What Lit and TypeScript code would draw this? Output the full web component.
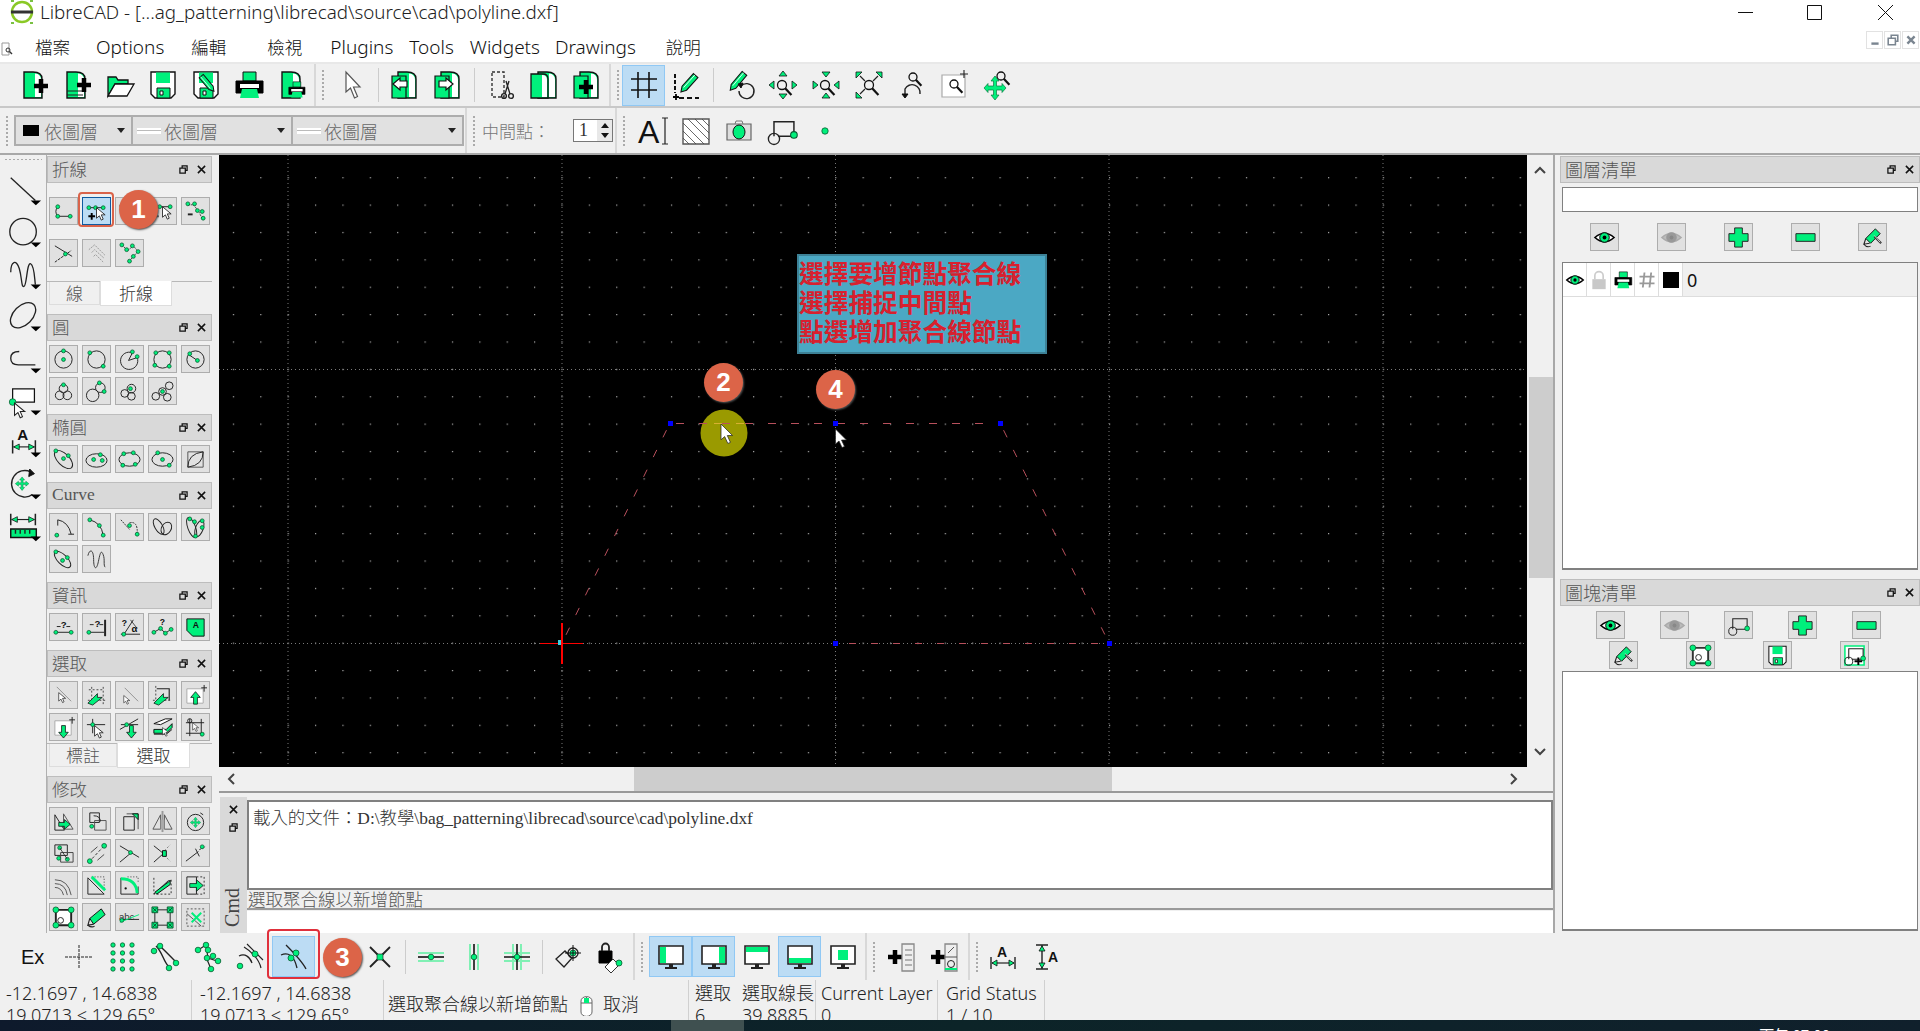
import { LitElement, css, html, svg } from "lit"
import { customElement } from "lit/decorators.js"

const G = "#00f07c"

// small drawing helpers, everything below is built from these
const L = (d: string, w = 1, c = "#222", dash = "") =>
  svg`<path d=${d} fill="none" stroke=${c} stroke-width=${w} stroke-dasharray=${dash} />`
const F = (d: string, f = G, c = "#111", w = 1) => svg`<path d=${d} fill=${f} stroke=${c} stroke-width=${w} />`
const N = (x: number, y: number, r = 2) =>
  svg`<circle cx=${x} cy=${y} r=${r} fill=${G} stroke="#0a5a30" stroke-width="0.8" />`
const C = (x: number, y: number, r: number, w = 1, c = "#222") =>
  svg`<circle cx=${x} cy=${y} r=${r} fill="none" stroke=${c} stroke-width=${w} />`
const E = (x: number, y: number, rx: number, ry: number, a = 0, w = 1) =>
  svg`<ellipse cx=${x} cy=${y} rx=${rx} ry=${ry} fill="none" stroke="#222" stroke-width=${w} transform="rotate(${a} ${x} ${y})" />`
const CUR = (x: number, y: number, s = 1) =>
  svg`<path transform="translate(${x} ${y}) scale(${s})" d="M0 0V11L3 8.5 5 13 7 12 5 7.5H9Z" fill="#fff" stroke="#222" stroke-width="0.9" />`
const PLUS = (x: number, y: number, a: number, t: number, c = "#000") =>
  svg`<path d="M${x - a} ${y}H${x + a}M${x} ${y - a}V${y + a}" stroke=${c} stroke-width=${t} fill="none" />`
const MAG = (x: number, y: number, r = 4.5) =>
  svg`<circle cx=${x} cy=${y} r=${r} fill="none" stroke="#111" stroke-width="1.3" /><path d="M${x + r * 0.7} ${y + r * 0.7}l${r * 1.4} ${r * 1.5}" stroke="#111" stroke-width="2.2" />`
const ARW = (d: string) => svg`<path d=${d} fill=${G} stroke="#111" stroke-width="0.8" />`
const TXT = (x: number, y: number, t: string, s: number, w = 700, f = "#111") =>
  svg`<text x=${x} y=${y} font-size=${s} font-weight=${w} fill=${f} font-family="Liberation Sans, sans-serif">${t}</text>`

const DOC = (x = 0) => svg`<g transform="translate(${x} 0)">
  ${F("M6 3H15Q24 3 24 10V29H6Z", G, "#111", 1.4)}${F("M17 4.5Q23 5 23 11V28H17Z", "#fff", "none")}</g>`
const FLOPPY = svg`${F("M4 3H28V25L24 29H8L4 25Z", "#fff", "#111", 1.4)}${F("M9 3.5H23V14H9Z", G, "none")}${F("M10 19H23V29H10Z", G, "#111")}${F("M13 22h3v4h-3z", "#fff")}`
const PRINTER = (s = 1, x = 0, y = 0) => svg`<g transform="translate(${x} ${y}) scale(${s})">
  ${F("M10 3H23V12H10Z", G, "#111")}${F("M3 12H30V24H3Z", "#000", "#000")}${F("M7 15H26V19H7Z", "#fff", "none")}${F("M9 20H24L26 29H7Z", G, "none")}</g>`
const PENCIL = (x: number, y: number, a = 45, s = 1) => svg`<g transform="translate(${x} ${y}) rotate(${a}) scale(${s})">
  ${F("M-3 -10H3V7L0 12L-3 7Z", G, "#111", 1.1)}${L("M-1 -10V7", 0.8, "#fff")}</g>`
const MONITOR = (k: string) => svg`
  ${F("M4 5H28V23H4Z", "#fff", "#222", 1.6)}
  ${k === "l" ? F("M5 6H11V22H5Z", G, "none") : ""}
  ${k === "r" ? F("M21 6H27V22H21Z", G, "none") : ""}
  ${k === "t" ? F("M5 6H27V11H5Z", G, "none") : ""}
  ${k === "b" ? F("M5 17H27V22H5Z", G, "none") : ""}
  ${k === "c" ? F("M11 9H21V19H11Z", G, "none") : ""}
  ${F("M14 23H18V26H14Z", "#222", "none")}${F("M10 26H22V28H10Z", "#222", "none")}`
const EYE = (gray = false) => svg`
  <path d="M2 12Q12 3 22 12Q12 21 2 12Z" fill=${gray ? "#bbb" : "#fff"} stroke=${gray ? "#aaa" : "#000"} stroke-width="1.6" />
  <circle cx="12" cy="12" r="5" fill=${gray ? "#999" : G} stroke=${gray ? "#999" : "#000"} />
  <circle cx="12" cy="12" r="2" fill=${gray ? "#888" : "#000"} />`
const BLOCK = svg`${L("M6 16V5H21V16H9", 1.1)}${C(6, 18, 4.2)}${N(21, 15, 2.5)}`
const MOVE = "M16 5l4 5h-2.500v4.500H22V12l5 4-5 4v-2.500h-4.500V22H20l-4 5-4-5h2.500v-4.500H10V20l-5-4 5-4v2.500h4.500V10H12z"

const topIcons: Record<string, any> = {
  new: svg`${DOC()}${PLUS(23, 17, 7, 4.5)}`,
  tpl: svg`${DOC()}${L("M6 22H22M6 26H22", 1)}${PLUS(23, 16, 7, 4.5)}`,
  open: svg`${F("M4 27V8H12L14 11H24V15H11L4 27Z", G, "#111", 1.3)}${F("M11 15H30L23 27H4Z", "#fff", "#111", 1.3)}`,
  save: FLOPPY,
  saveas: svg`${FLOPPY}${PENCIL(17, 14, -40, 0.9)}`,
  print: PRINTER(),
  preview: svg`${DOC()}${PRINTER(0.6, 11, 11)}`,
  arrow: F("M10 3V23L14.5 19 18.5 29 21.5 27.5 17.5 18H24Z", "#fff", "#555", 1.2),
  prev: svg`${DOC(3)}${F("M3 7H17V29H3Z", G, "#111", 1.2)}${F("M4 15L11 9V12H18V18H11V21Z", "#fff", "#111", 1.2)}`,
  next: svg`${DOC(3)}${F("M3 7H17V29H3Z", G, "#111", 1.2)}${F("M21 15L14 9V12H7V18H14V21Z", "#fff", "#111", 1.2)}`,
  cut: svg`${L("M7 3H19V28H7Z", 1.4, "#333", "3 2")}${C(19, 27, 2.4, 1.4)}${C(26, 27, 2.4, 1.4)}${L("M20 25L24 12M25 25L21 12", 1.3)}`,
  copy: svg`${DOC(4)}${F("M3 5H15Q20 5 20 10V29H3Z", G, "#111", 1.3)}${F("M14 6Q19 6 19 11V28H14Z", "#fff", "none")}`,
  paste: svg`${DOC(3)}${F("M3 7H17V29H3Z", G, "#111", 1.2)}${PLUS(15, 18, 7, 4.5)}`,
  grid: L("M10 3V29M21 3V29M3 10H29M3 21H29", 1.6, "#111"),
  draft: svg`${L("M4 5V24", 2, "#111", "4 2")}${L("M8 29H28", 2, "#111", "5 3")}${PLUS(5, 28, 3, 1.8)}${PENCIL(18, 14, 42, 1)}`,
  redraw: svg`${PENCIL(14, 12, 40, 1)}${L("M17 17A7.500 7.500 0 1 1 15 22", 1.4)}${F("M14 15L19 14L17 19Z", "#111")}`,
  zoomin: svg`${MAG(15, 16)}${ARW("M16 2l4 5h-8z")}${ARW("M16 30l4-5h-8z")}${ARW("M2 16l5 4v-8z")}${ARW("M30 16l-5 4v-8z")}`,
  zoomout: svg`${MAG(15, 16)}${ARW("M16 8l4-5h-8z")}${ARW("M16 24l4 5h-8z")}${ARW("M8 16l-5 4v-8z")}${ARW("M24 16l5 4v-8z")}`,
  zoomauto: svg`${MAG(16, 16)}${L("M7 7L12 12M25 7L20 12M7 25L12 20", 1.2)}${ARW("M3 3H9L3 9Z")}${ARW("M29 3H23L29 9Z")}${ARW("M3 29H9L3 23Z")}`,
  zoomprev: svg`${MAG(17, 8, 4)}${L("M24 25A8 8 0 0 0 9 20V27", 1.4)}${F("M6 25h6l-3 4z", "#111")}`,
  zoomwin: svg`${F("M3 6H26V28H3Z", "#fff", "#aaa", 1.2)}${MAG(15, 15, 4)}${L("M25 1V9M21 5H29", 1.1)}`,
  zoompan: svg`${F("M13 7l4 5h-2.5v5H20v-2.5l4 4.5-4 4.5V21h-5.5v5H17l-4 5-4-5h2.5v-5H6v2.5L2 19l4-4.5V17h5.5v-5H9z", G, "#0a7a40", 0.7)}${MAG(19, 7, 4)}`,
  atext: svg`${TXT(1, 28, "A", 32, 400)}${L("M25 3H31M28 3V29M25 29H31", 1.2)}`,
  hatch: svg`${F("M3 4H29V29H3Z", "#fff", "#555", 1.4)}${L("M3 8L24 29M3 16L16 29M8 4L29 25M15 4L29 18M22 4L29 11M3 23L9 29", 0.8, "#444")}`,
  camera: svg`${F("M4 9H28V25H4Z", "#ddd", "#666", 1.2)}${L("M12 9L13 6H19L20 9", 1, "#777")}<ellipse cx="16" cy="17" rx="6" ry="7" fill=${G} stroke="#111" />`,
  block: svg`<g transform="scale(1.33)">${BLOCK}</g>`,
  point: N(16, 16, 3.2),
  ex: TXT(1, 23, "Ex", 20, 400),
  cross: L("M2 16H30M16 4V28", 1, "#222", "3 1"),
  sgrid: svg`${[7, 16.5, 26].map(x => [4, 12, 20, 28].map(y => N(x, y, 2.2)))}`,
  send: svg`${L("M7 5C14 12 14 20 20 26", 1.4)}${L("M10 4C18 12 20 14 26 20", 1.4)}${N(11, 5, 2.8)}${N(27, 22, 2.8)}${N(20, 27, 2.8)}${N(5, 10, 2.8)}`,
  sonent: svg`${L("M6 9L14 4L16 17L25 20M14 16L19 28", 1.2)}${N(6, 9, 2.8)}${N(14, 4, 2.8)}${N(16, 9, 2.8)}${N(15, 17, 2.8)}${N(21, 15, 2.8)}${N(26, 20, 2.8)}${N(19, 28, 2.8)}`,
  scenter: svg`${L("M9 6C16 10 24 18 26 27M12 3L28 19", 1.2)}${N(20, 13, 3)}${N(5, 25, 2.8)}${L("M4 15C10 12 15 16 17 22", 1.2)}`,
  smiddle: svg`${L("M8 4C14 10 24 20 28 28", 1.3)}${L("M3 14C10 11 16 14 19 27", 1.3)}${N(18, 12, 3)}${N(13, 17, 3)}`,
  sdist: svg`${L("M6 16H26M16 4V28", 1.4)}${N(24, 16, 2.5)}`,
  sinter: svg`${L("M6 6L26 26M26 6L6 26", 1.8)}${F("M13 13H19V19H13Z", G, "#111", 0.6)}`,
  horiz: svg`${L("M3 12H29M3 20H29", 2, "#80f0b4")}${L("M3 16H29", 1.6, "#111")}${N(16, 16, 2.8)}`,
  vert: svg`${L("M12 3V29M20 3V29", 2, "#80f0b4")}${L("M16 3V29", 1.6, "#111")}${N(16, 16, 2.8)}`,
  ortho: svg`${L("M3 12H29M3 20H29M12 3V29M20 3V29", 2, "#80f0b4")}${L("M3 16H29M16 3V29", 1.6, "#111")}${N(16, 16, 2.8)}`,
  rel: svg`${L("M4 18L13 10 20 17 12 26Z", 1.3)}${C(21, 12, 5, 1.3)}${N(21, 12, 3)}${PLUS(21, 12, 8, 1, "#111")}`,
  lock: svg`${F("M4 10H17V22H4Z", "#000", "#000")}${L("M7 10V6A3.5 3.5 0 0 1 14 6V10", 1.8)}${F("M10 26L18 18 24 24 16 32Z", "#fff", "#333")}${N(24, 22, 3)}`,
  mon_l: MONITOR("l"),
  mon_r: MONITOR("r"),
  mon_t: MONITOR("t"),
  mon_b: MONITOR("b"),
  mon_c: MONITOR("c"),
  addlist: svg`${PLUS(8, 16, 7, 4.5)}${F("M15 3H27V30H15Z", "#eee", "#888", 1.3)}${L("M18 9H25M18 14H25M18 19H25M18 24H25", 1, "#777")}`,
  addblock: svg`${PLUS(8, 16, 7, 4.5)}${F("M15 3H27V30H15Z", "#eee", "#888", 1.3)}${L("M15 16H27M18 12L24 6", 1, "#555")}${C(21, 23, 3.5)}${L("M15 28H27", 2, G)}`,
  dimh: svg`${L("M4 16V28M28 16V28", 1.4)}${L("M5 22H27", 1.2)}${ARW("M5 22l5-3v6z")}${ARW("M27 22l-5-3v6z")}${TXT(10, 16, "A", 14)}`,
  dimv: svg`${L("M6 4H18M6 28H18M12 4V28", 1.4)}${ARW("M12 5l-3 5h6z")}${ARW("M12 27l-3-5h6z")}${TXT(18, 21, "A", 14)}`,
}

const dockIcons: Record<string, any> = {
  p1: svg`${L("M6 7Q2 12 6 17H19")}${N(6, 7)}${N(6, 17)}${N(19, 17)}`,
  p2: svg`${L("M4 8H20")}${N(4, 8)}${N(11, 8)}${N(19, 8)}${PLUS(7, 17, 3.5, 2)}${CUR(12, 8)}`,
  p3: svg`${L("M4 6H20")}${N(4, 6)}${N(19, 6)}${CUR(10, 8)}`,
  p4: svg`${L("M4 7H21")}${N(9, 7)}${N(20, 7)}${L("M3 17H8", 2)}${CUR(12, 7)}`,
  p5: svg`${L("M4 5L10 5 16 13 19 20", 1, "#444", "2 1")}${N(4, 4)}${N(11, 4)}${N(14, 11)}${N(19, 12)}${N(20, 19)}${L("M4 15H9", 2)}`,
  p6: svg`${L("M3 4L21 15")}${L("M3 21L20 9", 1, "#222", "3 1")}${N(14, 12.5)}`,
  p7: L("M4 8L10 3L21 14M7 11L10 8L20 17M9 15L11 13L19 21", 1, "#999", "2 1"),
  p8: svg`${L("M4 3L10 9L16 4L21 10L16 15L11 21", 1, "#444", "2 1")}${N(4, 3)}${N(9, 8)}${N(15, 4)}${N(21, 10)}${N(16, 15)}${N(12, 20)}`,
  c1: svg`${C(12, 12, 9)}${N(12, 3)}${N(12, 12)}`,
  c2: svg`${C(12, 12, 9)}${N(5, 5)}${N(19, 19)}`,
  c3: svg`${L("M15 5A9 9 0 1 0 20 10L11 13L15 5")}${N(15, 4)}${N(20, 9)}`,
  c4: svg`${C(12, 12, 9)}${N(5, 5)}${N(19, 5)}${N(4, 18)}${N(19, 19)}`,
  c5: svg`${C(12, 12, 9)}${L("M5 7L14 13")}${N(6, 6)}${N(14, 13)}`,
  c6: svg`${C(8, 16, 4.5)}${C(16, 16, 4.5)}${C(12, 9, 4.5)}${N(12, 5)}`,
  c7: svg`${C(8, 16, 6.5)}${C(16, 8, 5)}${N(15, 3)}${N(20, 12)}`,
  c8: svg`${C(7, 14, 4)}${C(14, 9, 4.5)}${C(14, 17, 4)}${N(13, 9)}`,
  c9: svg`${C(5, 17, 4)}${C(19, 6, 4)}${C(17, 18, 4)}${C(12, 12, 4)}${N(12, 12)}`,
  e1: svg`${E(12, 12, 12, 6, 45)}${N(4, 3)}${N(12, 11)}${N(17, 8)}`,
  e2: svg`${E(12, 13, 11, 7)}${N(9, 12)}${N(16, 7)}${N(18, 13)}`,
  e3: svg`${E(12, 12, 11, 7)}${N(6, 6)}${N(16, 5)}${N(5, 18)}${N(18, 17)}`,
  e4: svg`${E(12, 12, 11, 7)}${N(7, 5)}${N(12, 12)}${N(19, 18)}`,
  e5: svg`${L("M4 4H20V20H4Z", 1, "#555")}${L("M4 20Q4 6 20 4Q20 18 4 20Z")}`,
  u1: svg`${L("M6 4Q17 6 20 19M17 19H23M6 4V10")}${N(5, 20)}`,
  u2: svg`${L("M5 4Q17 7 19 20")}${N(5, 4)}${N(15, 10)}${N(19, 20)}`,
  u3: svg`${L("M3 4L12 14M12 7Q21 5 20 19", 1, "#333", "2 1")}${N(12, 10)}${N(20, 19)}`,
  u4: svg`${E(8, 11, 9, 4, 60)}${E(16, 13, 7, 5, 120)}`,
  u5: svg`${E(8, 12, 11, 4, 70)}${E(16, 13, 9, 4, 110)}${N(6, 3)}${N(11, 6)}${N(19, 5)}${N(12, 21)}${N(19, 12)}`,
  u6: svg`${E(11, 12, 11, 5, 45)}${N(4, 4)}${N(11, 13)}${N(16, 10)}`,
  u7: L("M3 8C5 0 9 2 9 12S12 24 14 14 17 2 19 7 19 18 21 20", 1, "#333"),
  i1: svg`${L("M4 17H20")}${N(4, 17)}${N(20, 17)}${L("M5 11H9M15 11H19", 1)}${TXT(9, 13, "?", 10)}`,
  i2: svg`${L("M4 17H20M21 4V21", 1)}${L("M21 4V21", 2)}${N(4, 17)}${TXT(10, 11, "?", 10)}${L("M5 9H9M15 9H19")}`,
  i3: svg`${L("M3 19H23M5 21L16 4")}${N(6, 19)}${TXT(4, 10, "?", 9)}${TXT(14, 17, "α", 10)}${L("M13 4L20 13", 0.8)}`,
  i4: svg`${L("M3 17L10 13L15 18L22 13")}${N(3, 17)}${N(10, 13)}${N(15, 18)}${N(21, 14)}${TXT(9, 9, "?", 9)}`,
  i5: svg`${F("M3 3H21V21H9L3 15Z", G, "#111", 1)}${TXT(9, 12, "A", 9, 700)}`,
  s1: svg`${L("M5 3L20 18", 0.9, "#888")}${CUR(7, 9, 0.8)}`,
  s2: svg`${L("M7 3V17M3 17H21M4 6H20M19 3V21", 0.9, "#333", "2 2")}${ARW("M3 20L13 10V14H18L8 22Z")}`,
  s3: svg`${L("M7 4L21 18", 0.9, "#888")}${CUR(6, 12, 0.7)}`,
  s4: svg`${L("M6 5H19V17", 1.2)}${L("M5 2V21M2 17H21", 0.9, "#333", "2 2")}${ARW("M3 20L13 10V14H18L8 22Z")}`,
  s5: svg`${F("M3 5H20V20H3Z", "#fff", "#aaa")}${L("M21 1V8M18 4H24")}${ARW("M12 8l5 6h-3v7h-4v-7H7z")}`,
  s6: svg`${F("M3 5H20V20H3Z", "#fff", "#aaa")}${L("M21 1V8M18 4H24")}${ARW("M12 23l5-6h-3v-7h-4v7H7z")}`,
  s7: svg`${L("M2 9H21M8 3V18")}${N(8, 9)}${CUR(10, 10)}`,
  s8: svg`${L("M2 14L21 3M3 9H21")}${N(9, 9)}${ARW("M14 23l5-6h-3v-7h-4v7H9z")}`,
  s9: svg`${F("M3 8L15 3H22L10 9Z", "#fff")}${F("M3 14H16L22 8V12L16 18H3Z", G)}${L("M3 19H16L22 14")}${CUR(12, 12, 0.7)}`,
  s10: svg`${L("M2 7H21M6 3V21M2 18H21M18 3V21", 1)}${C(6, 5, 2.2)}${CUR(9, 7, 0.7)}${N(19, 19)}`,
  m1: svg`${L("M3 5V21H13Z")}${L("M12 4L22 20H12Z", 1, "#555")}${ARW("M7 13h6v-3l6 5-6 5v-3H7z")}`,
  m2: svg`${L("M5 3H15V13H5Z")}${L("M10 11H22V21H10Z", 1, "#555")}${L("M9 6Q16 6 16 12")}${N(7, 17)}`,
  m3: svg`${L("M6 7H17V21H6Z")}${L("M9 4H21V20", 1, "#555")}${F("M15 4H21V10Z")}`,
  m4: svg`${L("M2 20L10 5V20ZM22 20L14 5V20Z", 1, "#555")}${L("M12 1V23", 2, "#999")}${F("M10 10H14V20H10Z", "#aaa", "none")}`,
  m5: svg`${C(12, 13, 8.5)}${L("M17 3L20 5")}<g transform="translate(12 13) scale(0.5) translate(-16 -16)">${F(MOVE, G, "#0a7a40", 0.8)}</g>`,
  m6: svg`${L("M3 3H16V14H3Z")}${L("M9 11H22V21H9Z", 1, "#444")}${N(8, 6)}${N(7, 17)}${N(16, 18)}${L("M8 6L16 18", 0.8)}`,
  m7: svg`${L("M4 21L20 4", 1, "#333", "3 2")}${N(5, 20, 2.5)}${N(20, 4, 2.5)}${L("M6 11L13 5M13 19L20 13", 0.8)}`,
  m8: svg`${L("M2 4L22 16M2 21L14 11", 1)}${N(13, 11)}`,
  m9: svg`${L("M3 4L13 12L3 21", 1)}${L("M14 9L20 3M14 14L20 20", 1, "#777", "2 2")}${F("M12 9H16V15H12Z", G)}`,
  m10: svg`${L("M2 20L15 10M12 7L16 15", 1)}${L("M16 8L22 5", 1, "#333", "2 1")}${N(19, 5)}`,
  m11: svg`${L("M3 6Q17 6 20 22M3 10Q14 10 16 22M3 14Q10 14 12 22", 1, "#555")}`,
  m12: svg`${L("M3 4V21H20L3 4")}${L("M7 3H20V17", 1, "#333", "1 2")}${L("M7 3L21 17", 3, G)}`,
  m13: svg`${L("M3 4V21H21V13")}${L("M10 3H21V10", 1, "#333", "1 2")}${L("M3 5Q19 5 20 20", 3, G)}<circle cx="8" cy="15" r="1.200" fill="#111" />`,
  m14: svg`${L("M3 4V21H21V6", 1, "#333", "2 2")}${L("M3 21L18 7H21")}${F("M4 19L20 7L20 11L6 21Z")}`,
  m15: svg`${L("M3 3H13V21H3Z")}${L("M13 3H21V21H13", 1, "#333", "2 2")}${ARW("M6 10h7V6l7 6-7 6v-4H6z")}`,
  m16: svg`${F("M4 4H20V20H4Z", "#fff", "#222", 2)}${C(9, 15, 3)}${N(4, 4, 3)}${N(20, 4, 3)}${N(4, 20, 3)}${N(20, 20, 3)}`,
  m17: svg`${F("M5 13L17 3L21 9L9 19Z")}${L("M5 13L3 20L9 19 M3 20Q7 23 10 21", 1.2)}`,
  m18: svg`${TXT(1, 15, "abc", 10, 400, "#333")}${L("M2 14L22 14", 1)}${L("M2 17L22 9", 1, G)}${N(4, 15)}`,
  m19: svg`${L("M4 4H20V20H4Z", 1)}${[[4, 4], [20, 4], [4, 20], [20, 20]].map(([x, y]) => svg`<path d="M${x - 3} ${y - 3}h6v6h-6z" fill=${G} stroke="#0a5a30" /><path d="M${x - 2} ${y - 2}l4 4m0-4l-4 4" stroke="#111" stroke-width="0.7" />`)}`,
  m20: svg`${L("M3 3H21V21H3Z", 1, "#555", "2 2")}${L("M3 8L18 21", 1, "#555")}${L("M8 7L18 17M18 7L8 17", 2, G)}`,
  eye: EYE(),
  eyeoff: EYE(true),
  add: F("M8 2H16V8H22V16H16V22H8V16H2V8H8Z", G, "#222", 1),
  del: F("M2 8H22V16H2Z", G, "#222", 1),
  edit: svg`${F("M5 13L15 3L20 8L10 18Z")}${L("M5 13L3 19L9 18M3 19Q6 23 10 21", 1.1)}${L("M14 11L21 18", 2.2, "#333")}${L("M14 10L20 17", 0.8, "#fff")}`,
  blockv: BLOCK,
  resize: svg`${F("M4 4H20V20H4Z", "#fff", "#333", 2)}${C(10, 14, 3)}${N(4, 4, 3)}${N(20, 4, 3)}${N(4, 20, 3)}${N(20, 20, 3)}`,
  saveb: svg`<g transform="scale(0.75)">${FLOPPY}</g>`,
  addb: svg`${F("M2 2H22V22H2Z", "#fff", G, 1.6)}${BLOCK}${PLUS(16, 18, 4, 2)}`,
}

// triangle marks the flyout on the vertical tool strip
const TRI = svg`<path d="M26 27H37L31.500 32Z" fill="#000" />`
const sideIcons = [
  svg`${L("M5 3L31 27", 1.4)}${TRI}`,
  svg`${C(18, 15.5, 14, 1.4)}${TRI}`,
  svg`${L("M5 14C5 2 11 0 14 10S16 30 19 29 22 3 26 5 30 20 31 27", 1.4)}${TRI}`,
  svg`${E(18, 15, 16, 10, -45, 1.4)}${TRI}`,
  svg`${L("M14 9Q5 9 5 16Q5 23 13 23H31", 1.4)}${TRI}`,
  svg`${F("M7 4H30V18H7Z", "#fff", "#111", 1.3)}${N(7, 18, 3.5)}${CUR(9, 19, 1.2)}${TRI}`,
  svg`${TXT(12, 14, "A", 16)}${L("M7 14V28M31 14V28", 1.6)}${L("M8 21H30", 1.2)}${ARW("M8 21l6-3v6z")}${ARW("M30 21l-6-3v6z")}${TRI}`,
  svg`${L("M26 3A14 14 0 1 0 28 27", 1.4)}${F("M25 0L30 5 24 8Z", "#111")}<g transform="translate(17 15.500) scale(0.65) translate(-16 -16)">${F(MOVE, G, "#0a7a40", 0.8)}</g>${TRI}`,
  svg`${L("M5 3V15M31 3V15", 1.6)}${L("M6 9H30", 1.2)}${ARW("M6 9l6-3v6z")}${ARW("M30 9l-6-3v6z")}${F("M5 19H32V28H5Z", G, "#111", 1.5)}${L("M10 20V24M15 20V24M20 20V24M25 20V24", 1.5)}${TRI}`,
]

const topRow = (names: string[]) => names.map(n => html`<div class="tool"><svg viewBox="0 0 32 32">${topIcons[n]}</svg></div>`)

interface Dock {
  title: string
  latin?: boolean
  cls: string
  rows: string[][]
  tabs?: [string, string, string]
}

const docks: Dock[] = [
  { title: "折線", cls: "poly tabbed", rows: [["p1", "p2", "p3", "p4", "p5"], ["p6", "p7", "p8"]], tabs: ["線", "折線", "wide1"] },
  { title: "圓", cls: "", rows: [["c1", "c2", "c3", "c4", "c5"], ["c6", "c7", "c8", "c9"]] },
  { title: "橢圓", cls: "", rows: [["e1", "e2", "e3", "e4", "e5"]] },
  { title: "Curve", latin: true, cls: "", rows: [["u1", "u2", "u3", "u4", "u5"], ["u6", "u7"]] },
  { title: "資訊", cls: "", rows: [["i1", "i2", "i3", "i4", "i5"]] },
  { title: "選取", cls: "tabbed", rows: [["s1", "s2", "s3", "s4", "s5"], ["s6", "s7", "s8", "s9", "s10"]], tabs: ["標註", "選取", "wide2"] },
  { title: "修改", cls: "", rows: [["m1", "m2", "m3", "m4", "m5"], ["m6", "m7", "m8", "m9", "m10"], ["m11", "m12", "m13", "m14", "m15"], ["m16", "m17", "m18", "m19", "m20"]] },
]

const menus = [
  { t: "檔案", gap: 0 },
  { t: "Options", gap: 26, en: true },
  { t: "編輯", gap: 27 },
  { t: "檢視", gap: 41 },
  { t: "Plugins", gap: 28, en: true },
  { t: "Tools", gap: 16, en: true },
  { t: "Widgets", gap: 16, en: true },
  { t: "Drawings", gap: 15, en: true },
  { t: "說明", gap: 30 },
]

const floatIcon = html`<svg class="ctl" viewBox="0 0 10 10"><path d="M3.500 3V1H9V6H7M1 3.500H7V9H1Z" fill="none" stroke="#111" stroke-width="1.400" /></svg>`
const closeIcon = html`<svg class="ctl" viewBox="0 0 10 10"><path d="M1 1L9 9M9 1L1 9" stroke="#111" stroke-width="1.700" /></svg>`

const dot = (i: string, active = false) =>
  html`<div class="btn ${active ? "active" : ""}"><svg viewBox="0 0 24 24">${dockIcons[i]}</svg></div>`

@customElement("app-root")
export class AppRoot extends LitElement {
  renderDock(d: Dock) {
    return html`
      <section class="dock ${d.cls}">
        <div class="dock-title">
          <span class=${d.latin ? "serif" : ""}>${d.title}</span>
          <i></i>${floatIcon}${closeIcon}
        </div>
        <div class="rows">
          ${d.rows.map(r => html`<div class="row">${r.map(i => dot(i, i === "p2"))}</div>`)}
        </div>
        ${d.tabs
          ? html`<div class="tabs ${d.tabs[2]}">
              <span class="tab">${d.tabs[0]}</span><span class="tab cur">${d.tabs[1]}</span>
            </div>`
          : ""}
      </section>
    `
  }

  renderCanvas() {
    const vs = [288, 562, 835.5, 1109, 1383]
    const hs = [369.5, 643.5]
    return svg`
      <svg class="cad" viewBox="219 155 1308 612">
        <defs>
          <pattern id="dots" patternUnits="userSpaceOnUse" x="835.2" y="368.8" width="27.38" height="27.38">
            <rect width="1.200" height="1.200" fill="#b0b0b0" />
          </pattern>
        </defs>
        <rect x="219" y="155" width="1308" height="612" fill="#000" />
        <rect x="219" y="155" width="1308" height="612" fill="url(#dots)" />
        ${vs.map(x => svg`<path d="M${x} 155V767" stroke="#7a7a7a" stroke-dasharray="1 3" />`)}
        ${hs.map(y => svg`<path d="M219 ${y}H1527" stroke="#7a7a7a" stroke-dasharray="1 3" />`)}
        <circle cx="724" cy="433" r="23.500" fill="#9a9a00" />
        <path d="M670 423.500H1000" stroke="#b8505c" stroke-dasharray="8 15" stroke-dashoffset="-6" />
        <path d="M714 423.500H722M736 423.500H744" stroke="#d8b030" />
        <path d="M670 423L562 643" stroke="#b8505c" stroke-dasharray="8 14" stroke-dashoffset="-8" />
        <path d="M1000 423L1109 643" stroke="#b8505c" stroke-dasharray="8 14" stroke-dashoffset="-8" />
        <path d="M841 643.500H1105" stroke="#b8505c" stroke-dasharray="7 15" stroke-dashoffset="-8" />
        <path d="M540 643.500H583" stroke="#f00" />
        <path d="M562 623V664" stroke="#f00" stroke-width="2" />
        <rect x="558" y="640" width="3" height="5" fill="#3fd0e0" />
        ${[[670, 423], [835, 423], [1000, 423], [835, 643], [1109, 643]].map(
          ([x, y]) => svg`<rect x=${x - 2} y=${y - 2} width="5" height="5" fill="#0000ff" />`,
        )}
        <path transform="translate(721 424) scale(1.050)" d="M0 0V15L3.500 12 6.500 18.500 9 17.500 6 11H11Z" fill="#fff" stroke="#222" stroke-width="0.700" />
        <path transform="translate(835.500 429) scale(1)" d="M0 0V15L3.500 12 6.500 18.500 9 17.500 6 11H11Z" fill="#fff" stroke="#222" stroke-width="0.700" />
      </svg>
    `
  }

  render() {
    return html`
      <div class="app">
        <header class="title">
          <svg class="logo" viewBox="0 0 24 24">
            <path d="M1 1h3M20 1h3M1 23h3M20 23h3" stroke="#7ac143" stroke-width="2" />
            <circle cx="12" cy="12" r="10" fill="none" stroke="#8ac926" stroke-width="2.500" />
            <path d="M1 12H23" stroke="#333" stroke-width="3" />
          </svg>
          <span>LibreCAD - [...ag_patterning\\librecad\\source\\cad\\polyline.dxf]</span>
          <i></i>
          <svg class="win mid" viewBox="0 0 15 15"><path d="M0 7.500H15" stroke="#111" /></svg>
          <svg class="win mid2" viewBox="0 0 15 15"><path d="M0.500 0.500H14.500V14.500H0.500Z" fill="none" stroke="#111" /></svg>
          <svg class="win last" viewBox="0 0 15 15"><path d="M0 0L15 15M15 0L0 15" stroke="#111" /></svg>
        </header>

        <nav class="menu">
          <svg class="mdi-ic" viewBox="0 0 12 14">
            <path d="M1 1H8V13H1Z" fill="#fff" stroke="#999" />
            <circle cx="7" cy="8" r="2" fill="none" stroke="#333" />
            <path d="M8.500 9.500L11 12" stroke="#333" stroke-width="1.400" />
          </svg>
          ${menus.map(m => html`<span class=${m.en ? "en" : "zh"} style="margin-left:${m.gap}px">${m.t}</span>`)}
          <i></i>
          <span class="mdi">
            <b><svg viewBox="0 0 10 10"><path d="M2 8H8" stroke="#7a8590" stroke-width="2" /></svg></b>
            <b><svg viewBox="0 0 10 10"><path d="M3.500 3V1H9V6H7M1 3.500H7V9H1Z" fill="none" stroke="#7a8590" stroke-width="1.300" /></svg></b>
            <b><svg viewBox="0 0 10 10"><path d="M2 2L8 8M8 2L2 8" stroke="#7a8590" stroke-width="2" /></svg></b>
          </span>
        </nav>

        <div class="bar one">
          ${topRow(["new", "tpl", "open", "save", "saveas", "print", "preview"])}
          <div class="end"></div>
          <div class="handle"></div>
          ${topRow(["arrow"])}
          <div class="sep"></div>
          ${topRow(["prev", "next"])}
          <div class="sep"></div>
          ${topRow(["cut", "copy", "paste"])}
          <div class="end"></div>
          <div class="handle tight"></div>
          <div class="tool on"><svg viewBox="0 0 32 32">${topIcons.grid}</svg></div>
          ${topRow(["draft"])}
          <div class="sep"></div>
          ${topRow(["redraw", "zoomin", "zoomout", "zoomauto", "zoomprev", "zoomwin", "zoompan"])}
        </div>

        <div class="bar two">
          <div class="handle"></div>
          <div class="combo c1"><em class="swatch"></em><span>依圖層</span><u></u></div>
          <div class="combo c2"><em class="dbl"></em><span>依圖層</span><u></u></div>
          <div class="combo c3"><em class="dbl"></em><span>依圖層</span><u></u></div>
          <div class="end"></div>
          <div class="handle tight"></div>
          <label class="lbl">中間點：</label>
          <div class="spin"><span>1</span>
            <div class="spin-btns"><u class="up"></u><u></u></div>
          </div>
          <div class="end gap"></div>
          <div class="handle"></div>
          ${topRow(["atext", "hatch", "camera", "block", "point"])}
        </div>

        <main class="main">
          <aside class="side">
            <div class="grip"></div>
            ${sideIcons.map(i => html`<svg class="side-ic" viewBox="0 0 38 38">${i}</svg>`)}
          </aside>
          <div class="left-docks">${docks.map(d => this.renderDock(d))}</div>

          <div class="center">
            <div class="view">
              ${this.renderCanvas()}
              <div class="vscroll">
                <svg class="arr" viewBox="0 0 14 10"><path d="M2 8L7 3L12 8" fill="none" stroke="#444" stroke-width="2" /></svg>
                <div class="vtrack"><div class="vthumb"></div></div>
                <svg class="arr" viewBox="0 0 14 10"><path d="M2 2L7 7L12 2" fill="none" stroke="#444" stroke-width="2" /></svg>
              </div>
            </div>
            <div class="hscroll">
              <svg class="arr-h" viewBox="0 0 10 14"><path d="M8 2L3 7L8 12" fill="none" stroke="#444" stroke-width="2" /></svg>
              <div class="hthumb"></div>
              <i></i>
              <svg class="arr-h" viewBox="0 0 10 14"><path d="M2 2L7 7L2 12" fill="none" stroke="#444" stroke-width="2" /></svg>
            </div>
            <section class="cmd">
              <div class="cmd-strip">
                ${closeIcon}${floatIcon}
                <i></i>
                <span>Cmd</span>
              </div>
              <div class="cmd-body">
                <div class="cmd-log">載入的文件：D:\\教學\\bag_patterning\\librecad\\source\\cad\\polyline.dxf</div>
                <div class="cmd-prompt">選取聚合線以新增節點</div>
                <div class="cmd-input"></div>
              </div>
            </section>
          </div>

          <aside class="right">
            <section class="rdock">
              <div class="dock-title"><span>圖層清單</span><i></i>${floatIcon}${closeIcon}</div>
              <div class="search"></div>
              <div class="r-btns layer-btns">${["eye", "eyeoff", "add", "del", "edit"].map(i => dot(i))}</div>
              <div class="list">
                <div class="layer">
                  <span><svg viewBox="0 0 24 24">${EYE()}</svg></span>
                  <span><svg viewBox="0 0 24 24"><path d="M7 11V7A5 5 0 0 1 17 7V11" fill="none" stroke="#ccc" stroke-width="2" /><rect x="4" y="11" width="16" height="12" fill="#c8c8c8" /></svg></span>
                  <span><svg viewBox="0 0 32 32">${PRINTER()}</svg></span>
                  <span><svg viewBox="0 0 24 24"><path d="M9 3L7 21M17 3L15 21M3 8H21M3 16H21" stroke="#999" stroke-width="2.200" /></svg></span>
                  <span><b class="blk"></b></span>
                  <em>0</em>
                </div>
              </div>
            </section>
            <section class="rdock second">
              <div class="dock-title"><span>圖塊清單</span><i></i>${floatIcon}${closeIcon}</div>
              <div class="r-btns blk-a">${["eye", "eyeoff", "blockv", "add", "del"].map(i => dot(i))}</div>
              <div class="r-btns blk-b">${["edit", "resize", "saveb", "addb"].map(i => dot(i))}</div>
              <div class="list fill"></div>
            </section>
          </aside>
        </main>

        <div class="bar three">
          ${topRow(["ex", "cross", "sgrid", "send", "sonent", "scenter"])}
          <div class="tool on"><svg viewBox="0 0 32 32">${topIcons.smiddle}</svg></div>
          ${topRow(["sdist", "sinter"])}
          <div class="sep"></div>
          ${topRow(["horiz", "vert", "ortho"])}
          <div class="sep"></div>
          ${topRow(["rel", "lock"])}
          <div class="end"></div>
          <div class="handle"></div>
          <div class="tool on"><svg viewBox="0 0 32 32">${topIcons.mon_l}</svg></div>
          <div class="tool on"><svg viewBox="0 0 32 32">${topIcons.mon_r}</svg></div>
          ${topRow(["mon_t"])}
          <div class="tool on"><svg viewBox="0 0 32 32">${topIcons.mon_b}</svg></div>
          ${topRow(["mon_c"])}
          <div class="end"></div>
          <div class="handle"></div>
          ${topRow(["addlist", "addblock"])}
          <div class="end"></div>
          <div class="handle tight"></div>
          ${topRow(["dimh", "dimv"])}
        </div>

        <footer class="status">
          <div class="cell c-a"><p>-12.1697 , 14.6838</p><p>19.0713 &lt; 129.65°</p></div>
          <div class="cell c-b"><p>-12.1697 , 14.6838</p><p>19.0713 &lt; 129.65°</p></div>
          <div class="cell c-c">
            <span>選取聚合線以新增節點</span>
            <svg class="mouse" viewBox="0 0 18 22">
              <path d="M3 7V18A5 4 0 0 0 14 18V7A5 4 0 0 0 3 7Z" fill="#fff" stroke="#666" />
              <path d="M3 9H14M8.500 3V9" stroke="#666" />
              <rect x="6" y="4" width="5" height="5" fill=${G} />
            </svg>
            <span class="cancel">取消</span>
          </div>
          <div class="cell c-d"><p>選取</p><p>6</p></div>
          <div class="cell c-e"><p>選取線長</p><p>39.8885</p></div>
          <div class="cell c-f"><p>Current Layer</p><p>0</p></div>
          <div class="cell c-g"><p>Grid Status</p><p>1 / 10</p></div>
        </footer>

        <div class="taskbar"><div class="task-item"></div><i></i><span>下午 07:00</span></div>

        <!-- numbered callouts drawn over the app -->
        <div class="ring r1"></div>
        <div class="ring r3"></div>
        <div class="badge b1">1</div>
        <div class="badge b2">2</div>
        <div class="badge b3">3</div>
        <div class="badge b4">4</div>
        <div class="note">選擇要增節點聚合線<br />選擇捕捉中間點<br />點選增加聚合線節點</div>
      </div>
    `
  }

  static styles = css`
    :host {
      display: block;
      width: 1920px;
      height: 1031px;
      overflow: hidden;
      --cjk: "Noto Sans CJK TC", sans-serif;
      --ui: "Noto Sans", "Noto Sans CJK TC", sans-serif;
      --serif: "Liberation Serif", "Noto Sans CJK TC", serif;
    }
    * {
      box-sizing: border-box;
    }
    i {
      flex: 1;
    }
    p {
      margin: 0;
    }
    .app {
      position: relative;
      width: 1920px;
      height: 1031px;
      display: flex;
      flex-direction: column;
      overflow: hidden;
      background: #f0f0f0;
      font: 300 18px var(--ui);
      color: #111;
    }
    .title {
      height: 24px;
      background: #fff;
      display: flex;
      align-items: center;
      padding-left: 10px;
      font-size: 18.800px;
      color: #222;
    }
    .title span {
      margin: -1px 0 0 6px;
      white-space: nowrap;
    }
    .logo {
      width: 24px;
      height: 24px;
    }
    .win {
      width: 15px;
      height: 15px;
      flex: none;
    }
    .win.mid {
      margin-right: 54px;
    }
    .win.mid2 {
      margin-right: 56px;
    }
    .win.last {
      margin-right: 27px;
    }
    .menu {
      height: 38px;
      background: #fff;
      display: flex;
      align-items: center;
      padding: 7px 0 0 35px;
      position: relative;
      white-space: nowrap;
    }
    .menu .en {
      font-size: 19px;
    }
    .menu .zh {
      font-size: 17.500px;
    }
    .mdi-ic {
      position: absolute;
      left: 1px;
      top: 18px;
      width: 12px;
      height: 14px;
    }
    .mdi {
      display: flex;
      gap: 1px;
      margin: -13px 1px 0 0;
    }
    .mdi b {
      width: 17px;
      height: 18px;
      border: 1px solid #e2e2e2;
      display: flex;
    }
    .mdi svg {
      width: 12px;
      height: 12px;
      margin: auto;
    }
    .bar {
      display: flex;
      align-items: center;
      flex: none;
      background: #f0f0f0;
      padding-left: 14px;
    }
    .bar.one {
      height: 46px;
      padding-left: 12px;
      border-top: 2px solid #e8e8e8;
      border-bottom: 2px solid #c8c8c8;
    }
    .bar.two {
      height: 47px;
      padding-left: 0;
      border-bottom: 2px solid #a8a8a8;
    }
    .bar.three {
      height: 47px;
    }
    .tool {
      width: 43px;
      height: 41px;
      flex: none;
      display: flex;
      align-items: center;
      justify-content: center;
    }
    .tool svg {
      width: 32px;
      height: 32px;
    }
    .tool.on {
      background: #bcdcf4;
      border: 1px solid #90c8f4;
    }
    .sep {
      width: 1px;
      height: 34px;
      background: #ccc;
      margin: 0 4px 0 5px;
      flex: none;
    }
    .three .sep {
      margin: 0 3px 0 4px;
    }
    .end {
      width: 2px;
      height: 100%;
      background: #d8d8d8;
      margin-left: 1px;
      flex: none;
    }
    .end.gap {
      margin-left: 2px;
    }
    .handle {
      width: 14px;
      height: 32px;
      flex: none;
      background: radial-gradient(circle, #aaa 0.8px, transparent 1px) 3px 0 / 8px 4px repeat-y;
    }
    .handle.tight {
      width: 11px;
    }
    .combo {
      height: 31px;
      background: #e1e1e1;
      border: 2px solid #adadad;
      display: flex;
      align-items: center;
      color: #666;
      font-size: 18px;
      flex: none;
    }
    .combo + .combo {
      border-left: 0;
    }
    .combo.c1 {
      width: 119px;
    }
    .combo.c2 {
      width: 160px;
    }
    .combo.c3 {
      width: 171px;
    }
    .combo span {
      font-family: var(--cjk);
      font-weight: 300;
    }
    .combo u {
      width: 0;
      height: 0;
      border: 4px solid transparent;
      border-top: 5px solid #222;
      border-bottom: 0;
      margin-left: auto;
      margin-right: 6px;
    }
    .swatch {
      width: 16px;
      height: 11px;
      background: #000;
      margin: 0 5px 0 7px;
    }
    .dbl {
      width: 24px;
      height: 6px;
      background: linear-gradient(#fff 2px, #bbb 2px, #bbb 3px, #fff 3px);
      margin: 0 3px 0 4px;
    }
    .lbl {
      width: 91px;
      margin-left: 4px;
      color: #777;
      font-family: var(--cjk);
      font-weight: 300;
      font-size: 17px;
      flex: none;
    }
    .spin {
      width: 40px;
      height: 23px;
      background: #fff;
      border: 1px solid #777;
      display: flex;
      align-items: center;
      padding-left: 5px;
      font: 18px var(--serif);
      color: #333;
      flex: none;
    }
    .spin-btns {
      margin-left: auto;
      width: 15px;
      height: 21px;
      background: #e8e8e8;
      display: flex;
      flex-direction: column;
      align-items: center;
      justify-content: space-around;
    }
    .spin-btns u {
      width: 0;
      height: 0;
      border: 4px solid transparent;
      border-top: 5px solid #111;
      border-bottom: 0;
    }
    .spin-btns u.up {
      border-top: 0;
      border-bottom: 5px solid #111;
    }
    .main {
      height: 778px;
      display: flex;
      flex: none;
    }
    .side {
      width: 47px;
      flex: none;
      border-right: 1px solid #b0b0b0;
      display: flex;
      flex-direction: column;
      align-items: center;
    }
    .grip {
      width: 38px;
      height: 3px;
      margin: 3px 0 14px;
      background: radial-gradient(circle, #aaa 0.8px, transparent 1px) 0 0 / 4px 3px repeat-x;
    }
    .side-ic {
      width: 36px;
      height: 36px;
      margin: 0 0 6px 1px;
      flex: none;
    }
    .left-docks {
      width: 172px;
      flex: none;
      padding-top: 1px;
    }
    .dock {
      width: 165px;
      margin-bottom: 9px;
    }
    .dock.tabbed {
      margin-bottom: 8px;
    }
    .dock-title {
      height: 27px;
      background: #d9d9d9;
      border: 1px solid #bdbdbd;
      display: flex;
      align-items: center;
      padding: 0 0 0 4px;
      color: #555;
      font-family: var(--cjk);
      font-weight: 300;
      font-size: 17.500px;
    }
    .dock-title span {
      margin-top: -2px;
    }
    .dock-title .serif {
      font-family: var(--serif);
      font-size: 17.500px;
    }
    .ctl {
      width: 9px;
      height: 9px;
      margin: 0 5px 0 4px;
      flex: none;
    }
    .rows {
      display: flex;
      flex-direction: column;
      gap: 4px;
      padding: 4px 0 0 2px;
    }
    .poly .rows {
      gap: 14px;
      padding-top: 14px;
    }
    .row {
      display: flex;
      gap: 4px;
    }
    .btn {
      width: 29px;
      height: 28px;
      flex: none;
      background: #e1e1e1;
      border: 1px solid #adadad;
      display: flex;
      align-items: center;
      justify-content: center;
    }
    .btn svg {
      width: 23px;
      height: 23px;
    }
    .btn.active {
      background: #bcdcf4;
      border-color: #0f5aa0;
    }
    .tabs {
      display: flex;
      align-items: flex-start;
      border-top: 1px solid #b8b8b8;
      padding-left: 2px;
      font-family: var(--cjk);
      font-weight: 300;
      font-size: 17px;
      color: #555;
    }
    .tabs.wide1 {
      margin-top: 14px;
    }
    .tabs.wide2 {
      margin-top: 2px;
    }
    .tab {
      height: 23px;
      background: #f0f0f0;
      border: 1px solid #ddd;
      border-top: 0;
      text-align: center;
      line-height: 22px;
    }
    .tab.cur {
      height: 25px;
      background: #fff;
      margin-top: -1px;
      color: #333;
      border-bottom: 1px solid #ddd;
      line-height: 24px;
    }
    .wide1 .tab {
      width: 51px;
    }
    .wide1 .tab.cur {
      width: 72px;
    }
    .wide2 .tab {
      width: 68px;
    }
    .wide2 .tab.cur {
      width: 73px;
    }
    .center {
      width: 1334px;
      flex: none;
      display: flex;
      flex-direction: column;
    }
    .view {
      height: 612px;
      display: flex;
    }
    .cad {
      width: 1308px;
      height: 612px;
      display: block;
      flex: none;
    }
    .vscroll {
      width: 26px;
      display: flex;
      flex-direction: column;
      align-items: center;
      padding: 10px 0;
    }
    .arr {
      width: 14px;
      height: 10px;
      flex: none;
    }
    .vtrack {
      flex: 1;
      padding-top: 202px;
      align-self: stretch;
      padding-left: 2px;
    }
    .vthumb {
      height: 201px;
      width: 24px;
      background: #cdcdcd;
    }
    .hscroll {
      height: 26px;
      display: flex;
      align-items: center;
      padding-left: 7px;
      border-bottom: 2px solid #999;
    }
    .arr-h {
      width: 10px;
      height: 14px;
      flex: none;
    }
    .hthumb {
      width: 478px;
      height: 24px;
      margin-left: 398px;
      background: #cdcdcd;
    }
    .hscroll i + svg {
      margin-right: 34px;
    }
    .cmd {
      height: 140px;
      display: flex;
      padding: 4px 0 0 1px;
    }
    .cmd-strip {
      width: 27px;
      background: #d9d9d9;
      display: flex;
      flex-direction: column;
      align-items: center;
      padding-top: 8px;
      overflow: hidden;
    }
    .cmd-strip .ctl {
      margin: 0 0 9px;
    }
    .cmd-strip span {
      font: 20px var(--serif);
      color: #444;
      writing-mode: vertical-rl;
      transform: rotate(180deg);
      margin: 0 2px 6px 0;
    }
    .cmd-body {
      flex: 1;
      display: flex;
      flex-direction: column;
      min-width: 0;
    }
    .cmd-log {
      height: 90px;
      margin-top: 3px;
      background: #fff;
      border: 2px solid #808080;
      padding: 2px 4px;
      font: 300 17.400px var(--serif);
      color: #333;
      white-space: nowrap;
    }
    .cmd-prompt {
      height: 20px;
      padding-left: 1px;
      border-bottom: 2px solid #9a9a9a;
      font: 300 17.500px/18px var(--cjk);
      color: #555;
      white-space: nowrap;
    }
    .cmd-input {
      flex: 1;
      background: #fff;
      margin-top: 1px;
    }
    .right {
      flex: 1;
      border-left: 2px solid #a8a8a8;
      padding: 1px 0 0 5px;
      display: flex;
      flex-direction: column;
    }
    .rdock {
      display: flex;
      flex-direction: column;
    }
    .rdock .dock-title {
      font-size: 18px;
    }
    .search {
      height: 25px;
      margin: 4px 2px 0 2px;
      background: #fff;
      border: 1px solid #808080;
    }
    .r-btns {
      display: flex;
      flex: none;
    }
    .layer-btns {
      gap: 38px;
      padding: 11px 0 0 30px;
    }
    .list {
      margin: 11px 2px 0 2px;
      height: 308px;
      background: #fff;
      border: 1px solid #808080;
      border-bottom-width: 2px;
    }
    .layer {
      height: 34px;
      background: #f0f0f0;
      border-bottom: 1px solid #ddd;
      display: flex;
      align-items: center;
    }
    .layer span {
      width: 24px;
      height: 33px;
      background: #fff;
      border-right: 1px solid #ddd;
      display: flex;
      align-items: center;
      justify-content: center;
      flex: none;
    }
    .layer svg {
      width: 20px;
      height: 20px;
    }
    .layer .blk {
      width: 16px;
      height: 16px;
      background: #000;
    }
    .layer em {
      font: 18px var(--ui);
      margin-left: 4px;
      color: #111;
    }
    .second {
      margin-top: 9px;
    }
    .blk-a {
      gap: 35px;
      padding: 5px 0 0 36px;
    }
    .blk-b {
      gap: 48px;
      padding: 2px 0 0 49px;
    }
    .list.fill {
      margin-top: 2px;
      height: 260px;
    }
    .status {
      height: 40px;
      display: flex;
      overflow: hidden;
      flex: none;
      font-size: 18px;
      line-height: 22px;
      white-space: nowrap;
      color: #222;
    }
    .cell {
      border-right: 1px solid #d0d0d0;
      padding-top: 2px;
      flex: none;
    }
    .c-a {
      width: 192px;
      padding-left: 6px;
    }
    .c-b {
      width: 192px;
      padding-left: 8px;
    }
    .c-c {
      width: 305px;
      padding: 12px 0 0 4px;
      display: flex;
      font-family: var(--cjk);
    }
    .mouse {
      width: 18px;
      height: 22px;
      margin: 2px 7px 0 10px;
      flex: none;
    }
    .c-d {
      width: 53px;
      padding-left: 6px;
      border-right: 0;
    }
    .c-e {
      width: 74px;
    }
    .c-f {
      width: 122px;
      padding-left: 5px;
    }
    .c-g {
      width: 107px;
      padding-left: 8px;
    }
    .taskbar {
      flex: 1;
      background: linear-gradient(90deg, #0e1a2c, #0c2428 50%, #10202c);
      display: flex;
      overflow: hidden;
      color: #fff;
      font: 15px var(--cjk);
      line-height: 20px;
    }
    .task-item {
      width: 73px;
      margin-left: 671px;
      background: #3f5050;
    }
    .taskbar span {
      margin: 5px 90px 0 0;
    }
    .ring {
      position: absolute;
      border-radius: 4px;
    }
    .r1 {
      left: 78px;
      top: 192px;
      width: 36px;
      height: 35px;
      border: 2px solid #d9634a;
    }
    .r3 {
      left: 267px;
      top: 929px;
      width: 53px;
      height: 50px;
      border: 2px solid #e0303c;
    }
    .badge {
      position: absolute;
      width: 39px;
      height: 39px;
      border-radius: 50%;
      background: #dc6448;
      box-shadow: 1px 1px 2px #555;
      color: #fff;
      font: 700 26px/39px "Liberation Sans", sans-serif;
      text-align: center;
    }
    .b1 {
      left: 119px;
      top: 190px;
    }
    .b2 {
      left: 704px;
      top: 363px;
    }
    .b3 {
      left: 323px;
      top: 938px;
    }
    .b4 {
      left: 816px;
      top: 370px;
    }
    .note {
      position: absolute;
      left: 797px;
      top: 254px;
      width: 250px;
      height: 100px;
      background: #4ba8c4;
      border: 2px solid #3d8196;
      padding: 2px 0 0 0;
      color: #d8202e;
      font: 700 24.700px/29px var(--cjk);
      white-space: nowrap;
    }
  `
}

declare global {
  interface HTMLElementTagNameMap {
    "app-root": AppRoot
  }
}
